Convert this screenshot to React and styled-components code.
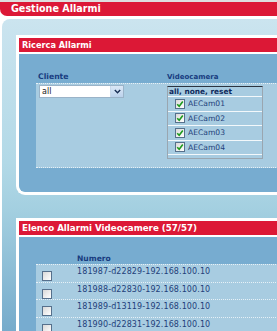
import styled, { createGlobalStyle } from 'styled-components'

const GlobalStyle = createGlobalStyle`
    html, body { margin: 0; padding: 0; background: #fff; }
    body { font-family: "DejaVu Sans", Verdana, sans-serif; overflow: hidden; }
`;

const Page = styled.div`
    width: 277px;
    height: 331px;
    overflow: hidden;
    background: #fff;
`;
const TopStrip = styled.div`
    height: 2px;
    background: #dedede;
`;
const TitleBar = styled.div`
    height: 14px;
    line-height: 14px;
    background: #dc1836;
    color: #fff;
    font-weight: bold;
    font-size: 9.6px;
    padding-left: 11px;
    border-bottom-left-radius: 7px;
    white-space: nowrap;
`;
const Content = styled.div`
    margin: 3px 0 0 2px;
    width: 360px;
    height: 320px;
    border-top-left-radius: 8px;
    background: linear-gradient(to bottom, #cbe4ef 0%, #b2d9e7 45%, #a3cfe0 60%, #73a9ca 100%);
    padding: 16px 0 0 14px;
    box-sizing: border-box;
`;
const Panel = styled.section`
    border-top: 3px solid #fff;
    border-left: 3px solid #fff;
    border-bottom: ${({ open }) => (open ? '0' : '3px solid #fff')};
    border-bottom-left-radius: ${({ open }) => (open ? '0' : '9px')};
    margin-top: ${({ gap }) => gap || 0}px;
    overflow: hidden;
`;
const PanelHeader = styled.div`
    height: 14px;
    line-height: 14px;
    background: #dc1836;
    color: #fff;
    font-weight: bold;
    font-size: ${({ size }) => size}px;
    padding-left: 3px;
    border-bottom: 2px solid #fff;
    white-space: nowrap;
`;
const PanelBody = styled.div`
    background: #77acd0;
    height: ${({ h }) => h}px;
    padding: ${({ top }) => top}px 0 0 17px;
    box-sizing: border-box;
    border-bottom-left-radius: 6px;
`;
const Label = styled.div`
    color: #173c80;
    font-weight: bold;
    font-size: ${({ size }) => size || 7.4}px;
    height: ${({ h }) => h || 12}px;
    line-height: ${({ h }) => h || 12}px;
    padding-left: ${({ indent }) => indent || 0}px;
    white-space: nowrap;
`;
const FilterGrid = styled.div`
    display: grid;
    grid-template-columns: 131px 1fr;
`;
const FilterArea = styled.div`
    grid-column: 1 / 3;
    display: grid;
    grid-template-columns: 131px 1fr;
    height: 85px;
    box-sizing: border-box;
    background: #a8cce1;
    border-top: 1px dotted #e6f0f6;
    border-bottom: 1px dotted #e6f0f6;
    padding-top: 1px;
`;
const Select = styled.div`
    margin-left: 3px;
    width: 85px;
    height: 13px;
    box-sizing: border-box;
    background: #fff;
    border: 1px solid #9ab3c8;
    display: flex;
    align-items: center;
    font-size: 8px;
    color: #222;
`;
const SelectValue = styled.span`
    flex: 1;
    padding-left: 2px;
    line-height: 11px;
`;
const SelectButton = styled.span`
    width: 12px;
    height: 11px;
    background: linear-gradient(#dbe8f6, #bcd2ec);
    border-left: 1px solid #c8d8ea;
    display: flex;
    align-items: center;
    justify-content: center;
`;
const CamBox = styled.div`
    width: 96px;
    height: 73px;
    box-sizing: border-box;
    border: 1px solid #9aa6b0;
    border-top: 1px solid #2b3440;
    margin-top: 1px;
`;
const CamLinks = styled.div`
    font-size: 7.4px;
    font-weight: 600;
    color: #0f2a5c;
    height: 9px;
    line-height: 9px;
    padding-left: 1px;
    border-bottom: 1px solid #f3f8fb;
    white-space: nowrap;
`;
const CamRow = styled.div`
    height: 14.5px;
    display: flex;
    align-items: center;
    border-bottom: 1px solid #f3f8fb;
    padding-left: 7px;
    box-sizing: border-box;
    font-size: 7.6px;
    color: #1f3f7a;
    gap: 3px;
`;
const Check = styled.span`
    width: 10px;
    height: 10px;
    box-sizing: border-box;
    border: 1px solid #56708c;
    background: linear-gradient(135deg, #d9d9d9, #fff);
    display: inline-flex;
    align-items: center;
    justify-content: center;
    flex: none;
`;
const TableRow = styled.div`
    display: grid;
    grid-template-columns: 41px 1fr;
    height: 17.5px;
    box-sizing: border-box;
    background: #a8cce1;
    border-top: 1px dotted #e6f0f6;
    font-size: 8px;
    color: #1f3f7a;
    letter-spacing: 0.1px;
`;
const TableHead = styled.div`
    display: grid;
    grid-template-columns: 41px 1fr;
    align-items: end;
`;
const CheckCell = styled.div`
    padding: 6px 0 0 6px;
`;
const NumCell = styled.div`
    padding-top: 2px;
    white-space: nowrap;
`;

const CheckMark = () => (
    <svg width="8" height="8" viewBox="0 0 8 8">
        <path d="M1.2 4.2 L3.2 6.2 L6.8 1.6" fill="none" stroke="#1d9a1d" strokeWidth="1.6" />
    </svg>
);

const Chevron = () => (
    <svg width="7" height="5" viewBox="0 0 7 5">
        <path d="M0.8 1 L3.5 3.8 L6.2 1" fill="none" stroke="#1a2f55" strokeWidth="1.4" />
    </svg>
);

const cams = ['AECam01', 'AECam02', 'AECam03', 'AECam04'];
const alarms = [
    '181987-d22829-192.168.100.10',
    '181988-d22830-192.168.100.10',
    '181989-d13119-192.168.100.10',
    '181990-d22831-192.168.100.10',
];

const App = () => {
    return (
        <Page>
            <GlobalStyle />
            <TopStrip />
            <TitleBar>Gestione Allarmi</TitleBar>
            <Content>
                <Panel>
                    <PanelHeader size={8.2}>Ricerca Allarmi</PanelHeader>
                    <PanelBody h={138} top={17}>
                        <FilterGrid>
                            <Label indent={2} size={7.7}>Cliente</Label>
                            <Label size={7}>Videocamera</Label>
                            <FilterArea>
                                <div>
                                    <Select>
                                        <SelectValue>all</SelectValue>
                                        <SelectButton><Chevron /></SelectButton>
                                    </Select>
                                </div>
                                <CamBox>
                                    <CamLinks>all, none, reset</CamLinks>
                                    {cams.map((c) => (
                                        <CamRow key={c}>
                                            <Check><CheckMark /></Check>
                                            {c}
                                        </CamRow>
                                    ))}
                                </CamBox>
                            </FilterArea>
                        </FilterGrid>
                    </PanelBody>
                </Panel>
                <Panel open gap={23}>
                    <PanelHeader size={8.7}>Elenco Allarmi Videocamere (57/57)</PanelHeader>
                    <PanelBody h={120} top={16}>
                        <TableHead>
                            <div />
                            <Label h={11} size={7.6}>Numero</Label>
                        </TableHead>
                        {alarms.map((a) => (
                            <TableRow key={a}>
                                <CheckCell><Check /></CheckCell>
                                <NumCell>{a}</NumCell>
                            </TableRow>
                        ))}
                    </PanelBody>
                </Panel>
            </Content>
        </Page>
    )
}

export default App
